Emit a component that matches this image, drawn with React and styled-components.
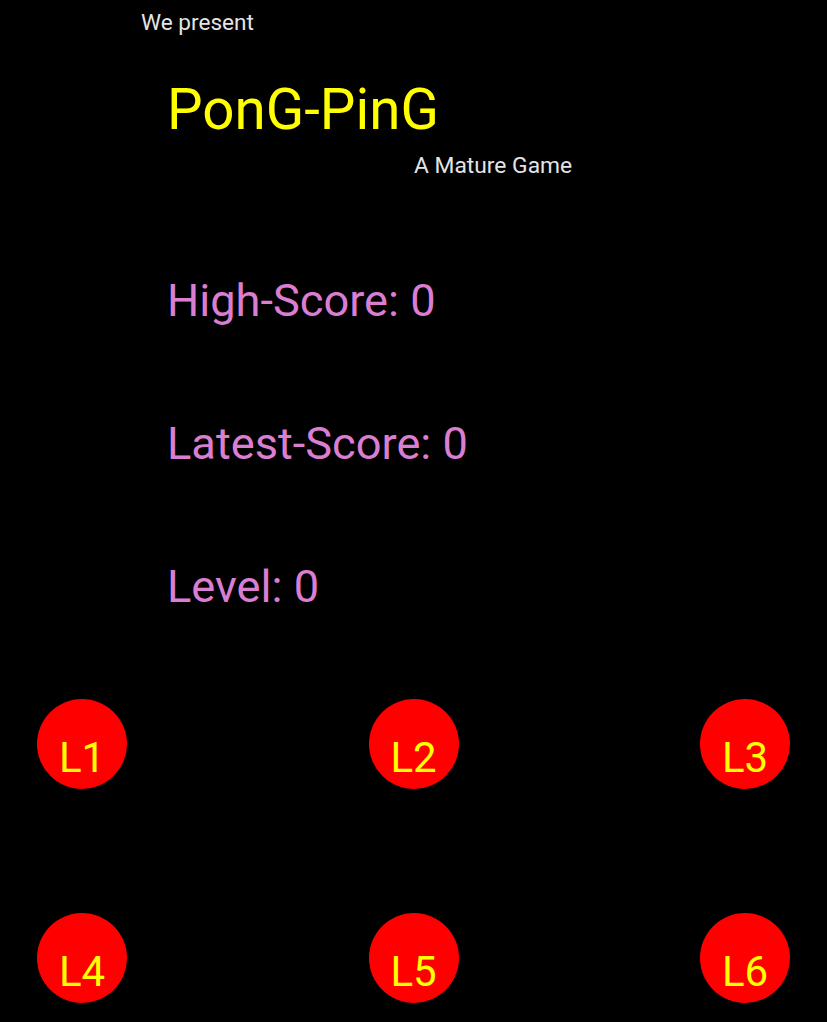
import styled, { createGlobalStyle } from "styled-components";

const GlobalStyle = createGlobalStyle`
  html, body {
    margin: 0;
    padding: 0;
    background-color: #000;
  }

  body {
    font-family: Roboto, "Noto Sans", sans-serif;
  }
`;

const Page = styled.div`
  width: 827px;
  height: 1022px;
  background-color: #000;
  overflow: hidden;
  display: flex;
  flex-direction: column;
`;

const Presents = styled.div`
  color: #e4e4e4;
  font-size: 22.6px;
  line-height: 1;
  margin: 12px 0 0 141px;
`;

const Title = styled.h1`
  color: #ffff00;
  font-size: 56.5px;
  font-weight: 400;
  line-height: 1;
  margin: 47px 0 0 167px;
`;

const Subtitle = styled.div`
  color: #e4e4e4;
  font-size: 22.8px;
  line-height: 1;
  margin: 17px 0 0 414px;
`;

const Stats = styled.div`
  display: flex;
  flex-direction: column;
  gap: 98px;
  margin: 100px 0 0 167px;
`;

const Stat = styled.div`
  color: #da7ed2;
  font-size: 45.2px;
  line-height: 1;
`;

const LevelGrid = styled.div`
  display: flex;
  flex-direction: column;
  gap: 124px;
  padding: 0 37px;
  margin-top: 89px;
`;

const LevelRow = styled.div`
  display: flex;
  justify-content: space-between;
`;

const LevelButton = styled.button`
  width: 90px;
  height: 90px;
  border: none;
  border-radius: 50%;
  background-color: #ff0000;
  color: #ffff00;
  font-family: Roboto, "Noto Sans", sans-serif;
  font-size: 42px;
  line-height: 1;
  padding: 38px 0 0 0;
  display: flex;
  justify-content: center;
  align-items: flex-start;
  cursor: pointer;
`;

const rows = [
  ["L1", "L2", "L3"],
  ["L4", "L5", "L6"],
];

const App = () => {
  const stats = { high: 0, latest: 0, level: 0 };

  return (
    <Page>
      <GlobalStyle />
      <Presents>We present</Presents>
      <Title>PonG-PinG</Title>
      <Subtitle>A Mature Game</Subtitle>

      <Stats>
        <Stat>High-Score: {stats.high}</Stat>
        <Stat>Latest-Score: {stats.latest}</Stat>
        <Stat>Level: {stats.level}</Stat>
      </Stats>

      <LevelGrid>
        {rows.map((row, i) => (
          <LevelRow key={i}>
            {row.map((name) => (
              <LevelButton key={name}>{name}</LevelButton>
            ))}
          </LevelRow>
        ))}
      </LevelGrid>
    </Page>
  );
};

export default App;
